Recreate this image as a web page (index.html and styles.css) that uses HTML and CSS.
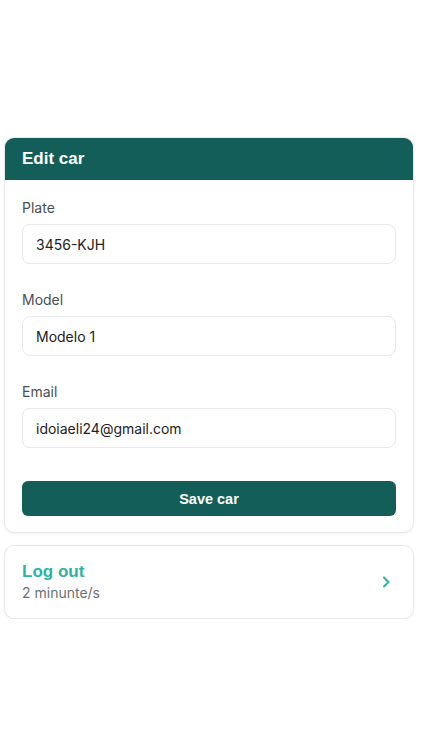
FILE: index.html
```html
<!DOCTYPE html>
<html lang="en">
<head>
    <meta charset="UTF-8">
    <meta name="viewport" content="width=device-width, initial-scale=1.0">
    <title>Edit car</title>
    <link rel="stylesheet" href="styles.css">
</head>
<body>
    <div class="page">
        <div class="card">
            <div class="card-header">Edit car</div>
            <form class="card-body" onsubmit="return false;">
                <div class="field">
                    <label for="plate">Plate</label>
                    <input type="text" id="plate" value="3456-KJH">
                </div>
                <div class="field">
                    <label for="model">Model</label>
                    <input type="text" id="model" value="Modelo 1">
                </div>
                <div class="field">
                    <label for="email">Email</label>
                    <input type="text" id="email" value="idoiaeli24@gmail.com">
                </div>
                <button type="submit" class="save-btn">Save car</button>
            </form>
        </div>

        <div class="card logout">
            <div class="logout-text">
                <div class="logout-title">Log out</div>
                <div class="logout-sub">2 minunte/s</div>
            </div>
            <svg class="chevron" width="10" height="14" viewBox="0 0 10 14">
                <path d="M3 2.5 L7.5 7 L3 11.5" fill="none" stroke="#2bb3a3" stroke-width="2" stroke-linecap="round" stroke-linejoin="round"/>
            </svg>
        </div>
    </div>
</body>
</html>
```

FILE: styles.css
```css
body {
    font-family: Inter, "Liberation Sans", Arial, sans-serif;
    margin: 0;
    background: #ffffff;
    color: #222;
}
.page {
    padding: 137px 8px 0 4px;
    display: flex;
    flex-direction: column;
    gap: 12px;
}
.card {
    border: 1px solid #e6e8ea;
    border-radius: 10px;
    background: #fff;
    box-shadow: 0 1px 3px rgba(0, 0, 0, 0.05);
    overflow: hidden;
}
.card-header {
    background-color: #135e58;
    color: #fff;
    font-family: "Liberation Sans", Arial, sans-serif;
    font-weight: 700;
    font-size: 17px;
    height: 42px;
    line-height: 42px;
    padding: 0 17px;
}
.card-body {
    padding: 19px 17px 16px;
    display: flex;
    flex-direction: column;
}
.field {
    display: flex;
    flex-direction: column;
    margin-bottom: 27px;
}
.field label {
    font-size: 14px;
    color: #4a4f55;
    margin-bottom: 8px;
    line-height: 17px;
}
.field input {
    height: 40px;
    box-sizing: border-box;
    border: 1px solid #e6e8ea;
    border-radius: 8px;
    padding: 0 13px;
    font-family: inherit;
    font-size: 14px;
    color: #222;
    outline: none;
}
.save-btn {
    margin-top: 6px;
    height: 35px;
    background-color: #135e58;
    color: #fff;
    border: none;
    border-radius: 6px;
    font-family: "Liberation Sans", Arial, sans-serif;
    font-size: 14.5px;
    font-weight: 700;
    cursor: pointer;
}
.logout {
    display: flex;
    align-items: center;
    justify-content: space-between;
    padding: 0 22px 0 17px;
    height: 72px;
}
.logout-title {
    color: #2bb3a3;
    font-family: "Liberation Sans", Arial, sans-serif;
    font-weight: 700;
    font-size: 17px;
    line-height: 21px;
}
.logout-sub {
    color: #6b7075;
    font-size: 14px;
    line-height: 21px;
}
```
